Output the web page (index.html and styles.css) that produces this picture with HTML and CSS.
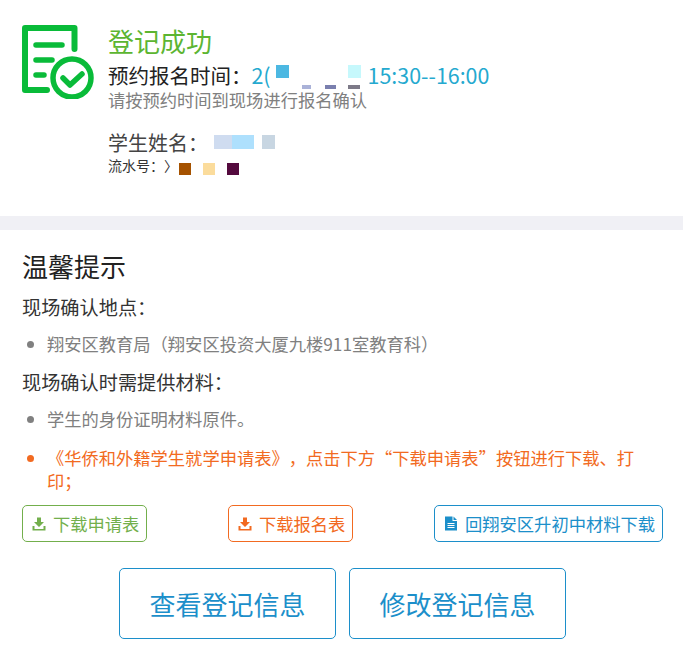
FILE: index.html
```html
<!DOCTYPE html>
<html lang="zh-CN">
<head>
    <meta charset="UTF-8">
    <meta name="viewport" content="width=device-width, initial-scale=1.0">
    <title>登记成功</title>
    <link rel="stylesheet" href="styles.css">
</head>
<body>
    <!-- 登记结果 -->
    <div class="result">
        <svg class="result-icon" width="72" height="74" viewBox="0 0 72 74" fill="none" stroke="#09bb39" stroke-linecap="round" stroke-linejoin="round">
            <path d="M25 65H3V3H52.5V24" stroke-width="6"/>
            <path d="M14 20H40M14 35H30M14 50H22" stroke-width="5.5"/>
            <circle cx="50" cy="53" r="19" stroke-width="5.5"/>
            <path d="M41 53L48 60L60 49" stroke-width="5.5"/>
        </svg>
        <div class="result-text">
            <div class="result-title">登记成功</div>
            <div class="result-time">预约报名时间：<span class="time-value">2(<i class="mask mask-blue"></i><i class="mask mask-light"></i>15:30--16:00</span></div>
            <div class="result-note">请按预约时间到现场进行报名确认<i class="tick tick-a"></i><i class="tick tick-b"></i><i class="tick tick-c"></i></div>
            <div class="result-name">学生姓名：<i class="name-mask"></i></div>
            <div class="result-serial">流水号：〉<i class="dot dot-brown"></i><i class="dot dot-cream"></i><i class="dot dot-plum"></i></div>
        </div>
    </div>

    <div class="band"></div>

    <!-- 温馨提示 -->
    <div class="tips">
        <h2>温馨提示</h2>
        <p class="tips-head">现场确认地点：</p>
        <ul>
            <li>翔安区教育局（翔安区投资大厦九楼911室教育科）</li>
        </ul>
        <p class="tips-head">现场确认时需提供材料：</p>
        <ul>
            <li>学生的身份证明材料原件。</li>
            <li class="warn">《华侨和外籍学生就学申请表》，点击下方“下载申请表”按钮进行下载、打印；</li>
        </ul>
        <div class="downloads">
            <a class="btn-small btn-green" href="#">
                <svg class="btn-icon" width="14" height="14" viewBox="0 0 14 14"><path d="M5 0.5H9V5H12L7 10L2 5H5ZM0.5 9H2.5V12H11.5V9H13.5V13.5H0.5Z" fill="currentColor"/></svg>
                下载申请表
            </a>
            <a class="btn-small btn-orange" href="#">
                <svg class="btn-icon" width="14" height="14" viewBox="0 0 14 14"><path d="M5 0.5H9V5H12L7 10L2 5H5ZM0.5 9H2.5V12H11.5V9H13.5V13.5H0.5Z" fill="currentColor"/></svg>
                下载报名表
            </a>
            <a class="btn-small btn-blue" href="#">
                <svg class="btn-icon" width="14" height="15" viewBox="0 0 14 15"><path d="M1 0.5H8.5V5H13V14.5H1Z" fill="currentColor"/><path d="M9.5 0.5L13 4H9.5Z" fill="currentColor"/><path d="M3.5 7.5H10.5M3.5 9.5H10.5M3.5 11.5H10.5" stroke="#fff" stroke-width="1"/></svg>
                回翔安区升初中材料下载
            </a>
        </div>
        <div class="actions">
            <a class="btn-big" href="#">查看登记信息</a>
            <a class="btn-big" href="#">修改登记信息</a>
        </div>
    </div>
</body>
</html>
```

FILE: styles.css
```css
body {
    margin: 0;
    font-family: "Noto Sans CJK SC", "Noto Sans", sans-serif;
    background-color: #fff;
    color: #333;
    text-spacing-trim: space-all;
}

i {
    font-style: normal;
}

.result {
    display: flex;
    height: 216px;
    box-sizing: border-box;
    padding: 25px 0 0 22px;
}

.result-icon {
    flex: none;
}

.result-text {
    margin-left: 14px;
}

.result-title {
    font-size: 26px;
    line-height: 36px;
    margin-top: -2px;
    color: #5cb531;
}

.result-time {
    font-size: 20.5px;
    line-height: 30px;
    margin-top: 1px;
    color: #222;
}

.time-value {
    font-size: 21.4px;
    color: #24a9cf;
}

.mask {
    display: inline-block;
    width: 13px;
    height: 13px;
    vertical-align: 6px;
}

.mask-blue {
    background-color: #4cb8e2;
    margin: 0 59px 0 5px;
}

.mask-light {
    background-color: #c6f8fc;
    margin-right: 7px;
}

.result-note {
    position: relative;
    font-size: 17.28px;
    line-height: 20px;
    margin-top: 0;
    color: #808080;
}

.tick {
    position: absolute;
    top: -5px;
    height: 4px;
}

.tick-a {
    left: 194px;
    width: 9px;
    background-color: #aab2d8;
}

.tick-b {
    left: 217px;
    width: 11px;
    background-color: #7a7fae;
}

.tick-c {
    left: 240px;
    width: 12px;
    background-color: #7d7a88;
}

.result-name {
    display: flex;
    align-items: center;
    font-size: 20px;
    line-height: 22px;
    margin-top: 22px;
    color: #444;
}

.name-mask {
    width: 61px;
    height: 14px;
    margin: -2px 0 0 6px;
    background: linear-gradient(90deg, #cfdcf0 0 30%, #aee0fd 30% 65%, #fff 65% 78%, #c8d6e2 78%);
}

.result-serial {
    display: flex;
    align-items: center;
    font-size: 14px;
    line-height: 18px;
    color: #333;
}

.dot {
    width: 12px;
    height: 12px;
    margin-top: 9px;
    margin-right: 12px;
}

.dot-brown {
    background-color: #a55200;
    margin-left: 1px;
}

.dot-cream {
    background-color: #fbdc9c;
}

.dot-plum {
    background-color: #540a3e;
}

.band {
    height: 14px;
    background-color: #f0f0f5;
}

.tips {
    padding: 17px 20px 0 22px;
}

h2 {
    margin: 0 0 8px;
    font-size: 26px;
    font-weight: 400;
    line-height: 38px;
    color: #222;
}

.tips-head {
    margin: 0;
    font-size: 19.2px;
    line-height: 28px;
    color: #333;
}

ul {
    margin: 0 0 3px;
    padding: 0 20px 0 25px;
    color: #808080;
    font-size: 17.28px;
}

li {
    line-height: 24px;
    padding: 11px 0 9px;
}

.warn {
    color: #f26a21;
    padding: 6px 0 0;
    line-height: 23px;
}

.downloads {
    display: flex;
    justify-content: space-between;
    margin-top: 13px;
}

.btn-small {
    display: flex;
    align-items: center;
    height: 37px;
    box-sizing: border-box;
    padding: 0 7px 0 9px;
    border: 1px solid;
    border-radius: 5px;
    font-size: 17.28px;
    text-decoration: none;
}

.btn-icon {
    margin-right: 7px;
}

.btn-green {
    color: #73af4c;
}

.btn-orange {
    color: #f26a21;
}

.btn-blue {
    color: #1c8fca;
}

.actions {
    display: flex;
    justify-content: center;
    gap: 13px;
    margin-top: 26px;
}

.btn-big {
    width: 217px;
    height: 71px;
    box-sizing: border-box;
    border: 1px solid #1c8fca;
    border-radius: 5px;
    font-size: 26px;
    line-height: 69px;
    text-align: center;
    color: #1c8fca;
    text-decoration: none;
}
```
